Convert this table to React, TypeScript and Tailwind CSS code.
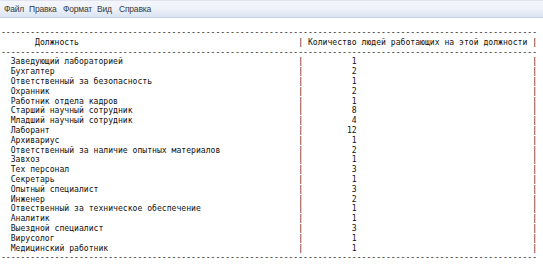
const rows: [string, number][] = [
  ["Заведующий лабораторией", 1],
  ["Бухгалтер", 2],
  ["Ответственный за безопасность", 1],
  ["Охранник", 2],
  ["Работник отдела кадров", 1],
  ["Старший научный сотрудник", 8],
  ["Младший научный сотрудник", 4],
  ["Лаборант", 12],
  ["Архивариус", 1],
  ["Ответственный за наличие опытных материалов", 2],
  ["Завхоз", 1],
  ["Тех персонал", 3],
  ["Секретарь", 1],
  ["Опытный специалист", 3],
  ["Инженер", 2],
  ["Отвественный за техническое обеспечение", 1],
  ["Аналитик", 1],
  ["Выездной специалист", 3],
  ["Вирусолог", 1],
  ["Медицинский работник", 1],
];

const menu = [
  { label: "Файл", w: "w-[25px]" },
  { label: "Правка", w: "w-[34px]" },
  { label: "Формат", w: "w-[34px]" },
  { label: "Вид", w: "w-[22px]" },
  { label: "Справка", w: "w-[40px]" },
];

// table is printed as plain text, 110 columns wide
const WIDTH = 110;
const line = "-".repeat(WIDTH);
const header =
  (" ".repeat(7) + "Должность").padEnd(61) +
  "| Количество людей работающих на этой должности |";

const body = rows.map(
  ([name, count]) =>
    ("  " + name).padEnd(61) +
    "|" +
    String(count).padStart(11) +
    " ".repeat(36) +
    "|"
);

const text = [line, header, line, ...body, line].join("\n");

export default function App() {
  return (
    <div className="w-[543px] h-[267px] bg-white overflow-hidden">
      <div className="h-[18px] flex items-center pl-[4px] border-t border-[#dfe4ee] border-b border-b-[#c3cfe2] bg-gradient-to-b from-[#f4f6fb] via-[#eef2f9] to-[#d9e3f2] font-['Liberation_Sans',sans-serif] text-[8.5px] text-[#3a3a3a] tracking-[-0.2px]">
        {menu.map((m) => (
          <span key={m.label} className={m.w}>
            {m.label}
          </span>
        ))}
      </div>
      <pre className="m-0 pt-[10px] pl-[1px] font-['DejaVu_Sans_Mono',monospace] text-[8.1px] leading-[9.8px] text-[#111] whitespace-pre">
        {text}
      </pre>
    </div>
  );
}
